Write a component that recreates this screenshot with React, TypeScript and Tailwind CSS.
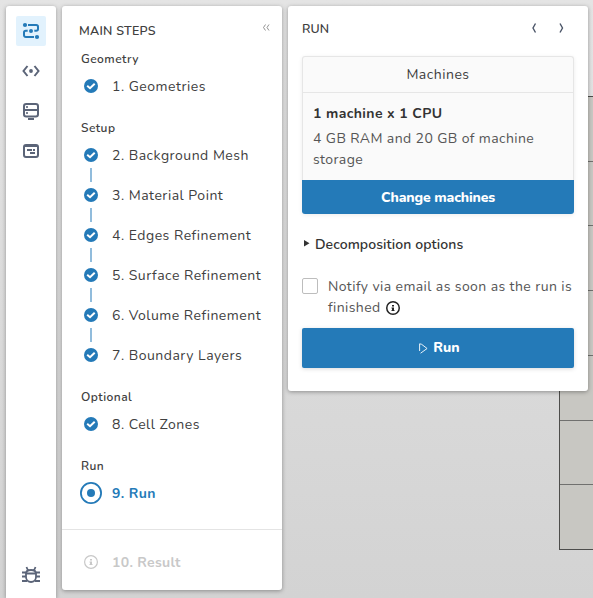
import React from "react";

const BLUE = "#247ab8";

function CheckIcon() {
  return (
    <svg width="14" height="14" viewBox="0 0 14 14" className="shrink-0">
      <circle cx="7" cy="7" r="7" fill={BLUE} />
      <path d="M3.2 6.800 6 9.200 10.700 4.700" fill="none" stroke="#fff" strokeWidth="2" />
    </svg>
  );
}

function InfoIcon({ color, size, stroke }: { color: string; size: number; stroke: number }) {
  return (
    <svg width={size} height={size} viewBox="0 0 14 14" fill="none" className="shrink-0">
      <circle cx="7" cy="7" r={7 - stroke / 2} stroke={color} strokeWidth={stroke} />
      <path d="M6 4h2v1.500H6zM6 6.500h2V9h.5v1H5.500V9H6V7.500h-.5v-1z" fill={color} />
    </svg>
  );
}

function Step({ label }: { label: string }) {
  return (
    <div className="flex h-[26px] items-center pl-[22px]">
      <CheckIcon />
      <span className="ml-3.5 whitespace-nowrap tracking-[0.5px]">{label}</span>
    </div>
  );
}

function Heading({ children }: { children: string }) {
  return (
    <h3 className="mb-[7px] h-3.5 pl-[19px] text-[12px] leading-[14px] font-[650] tracking-[0.45px]">{children}</h3>
  );
}

const setup = [
  "2. Background Mesh",
  "3. Material Point",
  "4. Edges Refinement",
  "5. Surface Refinement",
  "6. Volume Refinement",
  "7. Boundary Layers",
];

function Sidebar() {
  return (
    <nav className="flex h-[592px] w-[50px] shrink-0 flex-col items-center rounded-t-[3px] bg-white pt-2.5 pb-3.5 text-[#5b6478] shadow-[0_1px_4px_rgba(0,0,0,0.35)]">
      <div className="flex size-[30px] items-center justify-center rounded-[2px] bg-[#e2f2fd]">
        <svg width="18" height="18" viewBox="0 0 18 18" fill="none" stroke={BLUE} strokeWidth="2">
          <path d="M6 3h8.200a1.800 1.800 0 0 1 1.800 1.800V7a1.800 1.800 0 0 1-1.800 1.800H3.800A1.800 1.800 0 0 0 2 10.600v2.600A1.800 1.800 0 0 0 3.800 15H12" />
          <g fill={BLUE} stroke="none">
            <circle cx="3" cy="3" r="2.100" />
            <circle cx="15" cy="15" r="2.100" />
          </g>
          <circle cx="9" cy="8.900" r="2.700" fill={BLUE} stroke="#e2f2fd" strokeWidth="1.400" />
        </svg>
      </div>
      <div className="flex h-10 items-center pt-2.5">
        <svg width="18" height="12" viewBox="0 0 18 12" fill="none" stroke="currentColor" strokeWidth="2">
          <path d="M5.500 1 1.500 6l4 5M12.500 1l4 5-4 5" />
          <circle cx="9" cy="6" r="1.900" fill="currentColor" stroke="none" />
        </svg>
      </div>
      <div className="flex h-10 items-center pt-2.5">
        <svg width="16" height="17" viewBox="0 0 16 17" fill="none" stroke="currentColor" strokeWidth="2">
          <rect x="1" y="1" width="14" height="12.500" rx="2.200" />
          <path d="M1 7h14M5 16h6M3.200 4h1.600M3.200 10h1.600" />
        </svg>
      </div>
      <div className="flex h-10 items-center pt-2.5">
        <svg width="16" height="14" viewBox="0 0 16 14" fill="none" stroke="currentColor" strokeWidth="2">
          <rect x="1" y="1" width="14" height="12" rx="2" />
          <path d="M1 2h14" />
          <path d="M4 6h5M10 6h2M7 9h5" strokeWidth="1.800" />
        </svg>
      </div>
      <div className="mt-auto">
        <svg width="18" height="18" viewBox="0 0 18 18" fill="none" stroke="currentColor" strokeWidth="1.800">
          <path d="M4 7.500C4 5.500 6 4 9 4s5 1.500 5 3.500v3.500a5 5 0 0 1-10 0zM4 7.500h10M4.500 1l1.500 3.500M13.500 1 12 4.500M0 6.500h4M0 10.500h4M0 15h5M18 6.500h-4M18 10.500h-4M18 15h-5" />
        </svg>
      </div>
    </nav>
  );
}

function StepsPanel() {
  return (
    <section className="h-[584px] w-[220px] shrink-0 rounded-[3px] bg-white text-[14px] shadow-[0_1px_4px_rgba(0,0,0,0.35)]">
      <div className="flex h-[46px] items-start justify-between pt-[17px] pr-3 pl-[17px]">
        <h2 className="text-[12.5px] leading-4 font-semibold tracking-[0.25px]">MAIN STEPS</h2>
        <svg width="8" height="7" viewBox="0 0 8 7" className="mt-px" fill="none" stroke="#777" strokeWidth="0.800">
          <path d="M3.500.5 1.500 3.500l2 3M7 .5l-2 3 2 3" />
        </svg>
      </div>
      <Heading>Geometry</Heading>
      <Step label="1. Geometries" />
      <div className="h-[22px]" />
      <Heading>Setup</Heading>
      {setup.map((label, i) => (
        <React.Fragment key={label}>
          {i > 0 && <div className="ml-7 h-3.5 w-0.5 bg-[#91bcdc]" />}
          <Step label={label} />
        </React.Fragment>
      ))}
      <div className="h-[22px]" />
      <Heading>Optional</Heading>
      <Step label="8. Cell Zones" />
      <div className="h-[22px]" />
      <Heading>Run</Heading>
      <div className="flex h-[26px] items-center pl-[18px] font-bold text-[#247ab8]">
        <svg width="22" height="22" viewBox="0 0 22 22" fill="none">
          <circle cx="11" cy="11" r="10.100" stroke={BLUE} strokeWidth="1.800" />
          <circle cx="11" cy="11" r="4" fill={BLUE} />
        </svg>
        <span className="ml-2.5 tracking-[0.35px]">9. Run</span>
      </div>
      <div className="mt-[23px] flex h-[61px] items-center border-t border-[#e4e4e4] pt-1 pl-[22px] font-bold text-[#c8c8c8]">
        <InfoIcon color="#c8c8c8" size={14} stroke={1.2} />
        <span className="ml-3.5 tracking-[0.3px]">10. Result</span>
      </div>
    </section>
  );
}

function RunPanel() {
  return (
    <section className="h-[385px] w-[300px] shrink-0 rounded-[3px] bg-white px-3.5 text-[14px] shadow-[0_1px_4px_rgba(0,0,0,0.35)]">
      <div className="flex h-[50px] items-start justify-between pt-[15px] pr-2.5">
        <h2 className="text-[12.5px] leading-4 font-semibold">RUN</h2>
        <svg width="32" height="10" viewBox="0 0 32 10" className="mt-0.5" fill="none" stroke="#4b5568" strokeWidth="1.400">
          <path d="M3.500.5 1 5l2.500 4.500M28 .5 30.500 5 28 9.500" />
        </svg>
      </div>
      <div className="h-[158px] rounded-[3px] shadow-[0_1px_4px_rgba(0,0,0,0.08)]">
        <div className="h-[124px] rounded-t-[3px] border border-b-0 border-[#e6e6e6] bg-[#fafafa]">
          <div className="flex h-9 items-center justify-center border-b border-[#e6e6e6] tracking-[0.5px]">Machines</div>
          <div className="pt-2.5 pl-2.5">
            <div className="h-[25px] leading-[21px] font-bold tracking-[0.4px] text-[#333]">1 machine x 1 CPU</div>
            <p className="leading-[21px] tracking-[0.4px] text-[#555]">
              <span className="block whitespace-nowrap">4 GB RAM and 20 GB of machine</span>
              <span className="block">storage</span>
            </p>
          </div>
        </div>
        <button className="block h-[34px] w-full rounded-b-[3px] bg-[#247ab8] font-extrabold tracking-[-0.15px] text-white">Change machines</button>
      </div>
      <div className="mt-[19px] flex h-[22px] items-center font-[650] text-[#333]">
        <svg width="6" height="7" viewBox="0 0 6 7" className="mr-1.5 mb-0.5 ml-0.5"><path d="M0 0 5.500 3.300 0 6.600z" fill="#333" /></svg>
        <span className="-ml-px tracking-[0.08px]">Decomposition options</span>
      </div>
      <div className="mt-[21px] flex h-[53px] items-start">
        <div className="mt-0.5 size-4 shrink-0 rounded-[2px] border border-[#bdbdbd]" />
        <div className="ml-2.5 leading-[21px] whitespace-nowrap text-[#555]">
          <div className="tracking-[0.4px]">Notify via email as soon as the run is</div>
          <div className="flex items-center tracking-[0.4px]"><span className="mr-[5px]">finished</span><InfoIcon color="#222" size={14} stroke={1.5} /></div>
        </div>
      </div>
      <button className="-mt-px flex h-10 w-full items-center justify-center rounded-[2px] bg-[#247ab8] pb-px pl-[3px] font-extrabold text-white shadow-[0_1px_4px_rgba(0,0,0,0.15)]">
        <svg width="9" height="11" viewBox="0 0 9 11" className="mt-px mr-[5px]" fill="none" stroke="#fff" strokeWidth="0.900"><path d="M.6 8V.8l2 .5 5.500 4.200-6.500 4.700" /></svg>
        Run
      </button>
    </section>
  );
}

function MeshView() {
  return (
    <div className="absolute top-24 left-[559px] h-[454px] w-[34px] border-y border-l border-[#4d4d4b] bg-[#c8c7c2]">
      {[0, 1, 2, 3, 4, 5].map((i) => (
        <div key={i} className="h-[64.73px] border-b border-[#70706e]" />
      ))}
    </div>
  );
}

export default function App() {
  return (
    <main className="relative h-[598px] w-[593px] overflow-hidden bg-linear-to-b from-[#e4e4e4] to-[#d3d3d3] text-[#404040]" style={{ fontFamily: 'Nunito, Lato, "Open Sans", sans-serif' }}>
      <MeshView />
      <div className="relative flex items-start gap-1.5 pt-1.5 pl-1.5">
        <Sidebar />
        <StepsPanel />
        <RunPanel />
      </div>
    </main>
  );
}
